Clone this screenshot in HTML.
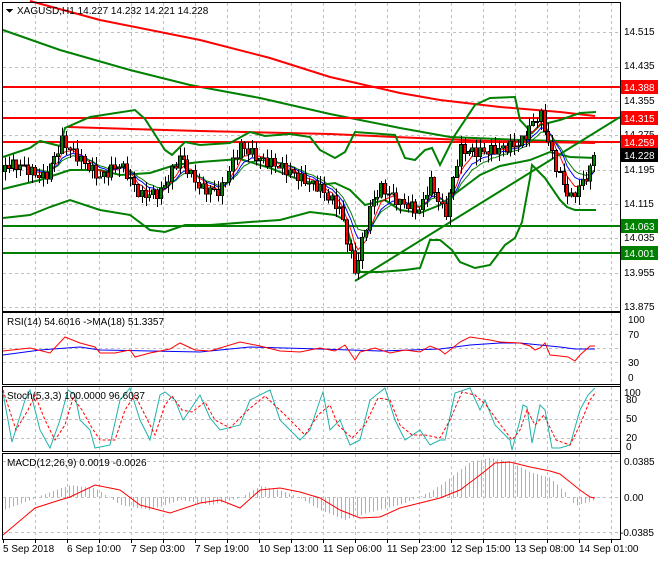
<!DOCTYPE html>
<html><head><meta charset="utf-8"><style>
body{margin:0;background:#fff;width:660px;height:560px;overflow:hidden;font-family:"Liberation Sans",sans-serif}
svg text{font-family:"Liberation Sans",sans-serif;font-size:10px}
</style></head><body>
<svg id="s" width="660" height="560" viewBox="0 0 660 560" xmlns="http://www.w3.org/2000/svg" shape-rendering="crispEdges">
<rect width="660" height="560" fill="#fff"/>
<g id="grid" stroke="#c0c0c0" stroke-dasharray="3,3" stroke-width="1"></g>
<!-- main panel lines -->
<g fill="none" stroke-width="2" shape-rendering="auto">
<polyline stroke="#ff0000" points="30,1 100,20 200,40 270,58 330,77 400,93 440,100 500,107 560,112 595,116"/>
<polyline stroke="#008000" points="3,30 60,50 130,70 190,85 260,98 330,114 400,128 450,137 520,140 596,142"/>
<line stroke="#ff0000" x1="3" y1="87" x2="620" y2="87"/>
<line stroke="#ff0000" x1="3" y1="118" x2="620" y2="118"/>
<line stroke="#ff0000" x1="3" y1="142" x2="620" y2="142"/>
<polyline stroke="#ff0000" points="68,127 130,129 200,131 330,134 440,139 490,141 595,143"/>
<line stroke="#008000" x1="3" y1="226" x2="620" y2="226"/>
<line stroke="#008000" x1="3" y1="253" x2="620" y2="253"/>
<polyline stroke="#008000" points="3,157 30,148 40,141 60,146 65,128 90,117 135,110 145,119 165,150 172,155 185,142 200,145 230,143 250,132 265,136 290,134 310,137 320,150 335,158 345,152 355,132 395,135 405,158 415,160 425,150 432,148 440,165 455,135 475,105 490,98 515,97 520,120 532,133 540,125 560,120 580,113 596,112"/>
<polyline stroke="#008000" points="3,189 40,180 70,170 100,170 120,175 150,173 175,165 200,162 240,159 270,168 300,180 320,185 335,183 350,190 365,205 385,200 400,210 420,213 440,205 460,190 480,175 500,166 530,160 550,152 570,157 596,158"/>
<polyline stroke="#008000" points="3,218 30,215 50,207 70,200 100,210 130,215 150,230 165,232 185,225 210,225 250,222 280,220 310,212 335,215 345,220 355,258 360,272 380,272 405,270 420,268 430,240 440,240 452,250 460,262 475,268 490,265 505,245 515,238 522,222 530,178 532,165 545,178 560,200 567,207 575,210 596,210"/>
<line stroke="#008000" x1="355" y1="281" x2="620" y2="117"/>
</g>
<g id="mas" fill="none" stroke-width="1" shape-rendering="auto"></g>
<g id="candles"></g>
<!-- panel frames -->
<g fill="none" stroke="#000" stroke-width="1">
<rect x="2.5" y="2.5" width="618" height="309"/>
<rect x="2.5" y="312.5" width="618" height="72"/>
<rect x="2.5" y="386.5" width="618" height="65"/>
<rect x="2.5" y="453.5" width="618" height="86"/>
</g>
<!-- RSI -->
<g fill="none" stroke-width="1" shape-rendering="auto">
<polyline stroke="#0000ff" points="3,355 40,350 80,347 100,350 200,352 250,347 320,349 380,351 440,349 470,345 500,343 520,343 560,347 575,349 595,349"/>
<polyline stroke="#ff0000" points="3,351 30,348 50,353 65,337 80,343 95,347 100,353 115,353 130,350 135,357 150,353 170,349 180,343 195,350 210,351 240,342 260,346 280,351 300,352 320,348 335,351 345,345 355,360 360,352 375,348 390,353 405,350 420,352 430,346 440,350 445,354 460,342 470,337 490,340 500,342 520,343 530,346 535,350 540,348 545,343 550,355 560,356 568,357 575,361 580,355 590,346 595,346"/>
</g>
<!-- Stoch -->
<g fill="none" stroke-width="1" shape-rendering="auto">
<polyline stroke="#20b2aa" points="3,393 12,442 25,400 30,390 40,430 50,448 60,420 68,390 75,395 80,420 90,430 95,448 110,445 120,400 130,388 140,420 150,440 160,395 165,392 175,400 183,420 190,410 200,395 210,418 220,430 240,425 250,400 270,390 280,420 300,440 310,430 320,400 323,392 330,430 340,420 350,445 360,440 370,400 385,388 395,420 405,440 420,430 430,445 440,440 445,440 455,393 470,388 480,410 485,400 495,425 510,440 512,450 520,420 523,405 527,407 532,443 540,405 545,410 552,448 560,448 570,445 580,410 588,395 595,388"/>
<polyline stroke="#ff0000" stroke-dasharray="3,2" points="3,390 16,430 28,410 35,395 45,420 55,440 65,425 73,398 82,410 92,428 100,440 115,440 125,410 135,395 145,415 155,435 165,405 172,396 182,410 192,412 205,402 215,420 230,428 248,410 265,396 285,415 305,435 318,415 330,405 338,425 352,438 365,425 378,398 390,400 400,425 412,435 425,435 440,438 450,420 462,392 475,395 486,405 497,420 512,440 520,430 527,410 535,425 544,415 556,440 570,445 580,425 590,400 596,392"/>
</g>
<!-- MACD -->
<g id="hist" stroke="#b0b0b0" stroke-width="1"></g>
<polyline fill="none" stroke="#ff0000" stroke-width="1" shape-rendering="auto" points="3,535 35,508 60,500 70,497 95,485 120,490 140,505 170,513 200,503 220,500 240,508 260,490 280,488 300,492 320,498 340,510 360,518 380,517 400,508 420,503 440,498 460,490 480,475 495,463 510,462 530,467 550,471 560,474 570,482 580,490 590,497 595,498"/>
<!-- price axis -->
<g fill="#000">
<text x="624" y="35">14.515</text>
<text x="624" y="69">14.435</text>
<text x="624" y="104">14.355</text>
<text x="624" y="138">14.275</text>
<text x="624" y="173">14.195</text>
<text x="624" y="207">14.115</text>
<text x="624" y="241">14.035</text>
<text x="624" y="276">13.955</text>
<text x="624" y="310">13.875</text>
<text x="628" y="323">100</text><text x="628" y="338">70</text><text x="628" y="366">30</text><text x="628" y="381">0</text>
<text x="624" y="396">100</text><text x="626" y="403">80</text><text x="626" y="422">50</text><text x="626" y="441">20</text><text x="626" y="450">0</text>
<text x="624" y="465">0.0385</text><text x="624" y="501">0.00</text><text x="620" y="536">-0.0385</text>
</g>
<g stroke="#000"><line x1="620.5" y1="2" x2="620.5" y2="540"/></g>
<rect x="621" y="80" width="37" height="14" fill="#ff0000"/><text x="624" y="91" fill="#fff">14.388</text>
<rect x="621" y="111" width="37" height="14" fill="#ff0000"/><text x="624" y="122" fill="#fff">14.315</text>
<rect x="621" y="135" width="37" height="14" fill="#ff0000"/><text x="624" y="146" fill="#fff">14.259</text>
<rect x="621" y="148" width="37" height="14" fill="#000"/><text x="624" y="159" fill="#fff">14.228</text>
<rect x="621" y="219" width="37" height="14" fill="#008000"/><text x="624" y="230" fill="#fff">14.063</text>
<rect x="621" y="246" width="37" height="14" fill="#008000"/><text x="624" y="257" fill="#fff">14.001</text>
<!-- time axis -->
<g fill="#000">
<text x="3" y="552">5 Sep 2018</text>
<text x="67" y="552">6 Sep 10:00</text>
<text x="131" y="552">7 Sep 03:00</text>
<text x="195" y="552">7 Sep 19:00</text>
<text x="259" y="552">10 Sep 13:00</text>
<text x="323" y="552">11 Sep 06:00</text>
<text x="387" y="552">11 Sep 23:00</text>
<text x="451" y="552">12 Sep 15:00</text>
<text x="515" y="552">13 Sep 08:00</text>
<text x="579" y="552">14 Sep 01:00</text>
</g>
<g stroke="#000" id="ticks"></g>
<!-- titles -->
<path d="M6,9 L13,9 L9.5,13 Z" fill="#000"/>
<text x="17" y="14" fill="#000">XAGUSD,H1  14.227 14.232 14.221 14.228</text>
<text x="7" y="325" fill="#000">RSI(14) 54.6016  -&gt;MA(18) 51.3357</text>
<text x="7" y="399" fill="#000">Stoch(5,3,3) 100.0000 96.6037</text>
<text x="7" y="466" fill="#000">MACD(12,26,9) 0.0019 -0.0026</text>
</svg>
<script>
(function(){
var NS="http://www.w3.org/2000/svg";
function el(p,n,a){var e=document.createElementNS(NS,n);for(var k in a)e.setAttribute(k,a[k]);p.appendChild(e);return e;}
var g=document.getElementById('grid');
for(var x=35;x<620;x+=32){[[3,311],[313,384],[387,451],[454,539]].forEach(function(r){el(g,'line',{x1:x+.5,y1:r[0],x2:x+.5,y2:r[1]});});}
[32,67,101,135,170,204,238,273,307].forEach(function(y){el(g,'line',{x1:3,y1:y+.5,x2:620,y2:y+.5});});
[334,348,362].forEach(function(y){el(g,'line',{x1:3,y1:y+.5,x2:620,y2:y+.5});});
[400,419,438].forEach(function(y){el(g,'line',{x1:3,y1:y+.5,x2:620,y2:y+.5});});
[461,497,532].forEach(function(y){el(g,'line',{x1:3,y1:y+.5,x2:620,y2:y+.5});});
var t=document.getElementById('ticks');
for(var x=3;x<620;x+=32)el(t,'line',{x1:x+.5,y1:540,x2:x+.5,y2:543});
var kp=[[3,14.19],[20,14.2],[45,14.19],[62,14.28],[80,14.23],[100,14.17],[120,14.19],[140,14.12],[160,14.14],[180,14.24],[200,14.17],[220,14.15],[240,14.24],[260,14.2],[280,14.19],[300,14.18],[320,14.17],[340,14.12],[355,13.96],[370,14.1],[380,14.14],[400,14.1],[420,14.09],[430,14.17],[445,14.1],[460,14.26],[480,14.25],[500,14.24],[520,14.24],[540,14.31],[555,14.2],[570,14.13],[580,14.17],[595,14.228]];
function P(x){for(var i=1;i<kp.length;i++)if(x<=kp[i][0]){var a=kp[i-1],b=kp[i];return a[1]+(b[1]-a[1])*(x-a[0])/(b[0]-a[0]);}return 14.228;}
function Y(p){return 32+(14.515-p)*430;}
var c=document.getElementById('candles'),prev=P(3),cl=[],xs=[];
for(var x=5;x<=595;x+=3.8){var n=Math.sin(x*1.7)*0.018+Math.sin(x*0.63)*0.012;var cp=P(x)+n;if(x>593)cp=14.228;
var o=prev,hi=Math.max(o,cp)+Math.abs(Math.sin(x*2.3))*0.02,lo=Math.min(o,cp)-Math.abs(Math.cos(x*1.9))*0.02;
var xx=Math.round(x);el(c,'line',{x1:xx+.5,y1:Y(hi),x2:xx+.5,y2:Y(lo),stroke:'#000'});
var top=Y(Math.max(o,cp)),bot=Y(Math.min(o,cp));if(bot-top<1)bot=top+1;
el(c,'rect',{x:xx-1.5,y:top,width:3,height:bot-top,fill:cp>=o?'#008000':'#ff0000',stroke:'#000','stroke-width':0.6});
prev=cp;cl.push(cp);xs.push(xx);}
var m=document.getElementById('mas');
[[5,'#ff0000'],[8,'#0000ff'],[11,'#008000']].forEach(function(q){var k=2/(q[0]+1),e=cl[0],pts=[];for(var i=0;i<cl.length;i++){e=e+(cl[i]-e)*k;pts.push(xs[i]+','+Y(e).toFixed(1));}el(m,'polyline',{points:pts.join(' '),stroke:q[1]});});
var mk=[[3,510],[30,500],[50,492],[70,485],[95,488],[120,505],[150,510],[180,500],[210,505],[240,498],[260,486],[280,490],[300,498],[320,510],[345,520],[370,512],[400,505],[430,492],[450,478],[470,462],[490,458],[510,462],[530,472],[550,478],[565,492],[575,506],[595,500]];
function H(x){for(var i=1;i<mk.length;i++)if(x<=mk[i][0]){var a=mk[i-1],b=mk[i];return a[1]+(b[1]-a[1])*(x-a[0])/(b[0]-a[0]);}return 497;}
var h=document.getElementById('hist');
for(var x=5;x<=595;x+=4){var y=H(x);el(h,'line',{x1:x+.5,y1:497,x2:x+.5,y2:y});}
})();
</script>
</body></html>
